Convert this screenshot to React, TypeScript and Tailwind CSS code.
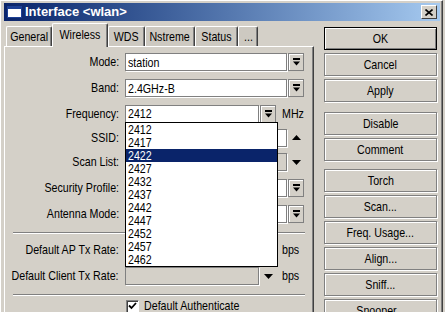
import React from 'react';

const FONT = "font-['Liberation_Sans',Arial,sans-serif]";

/* narrow text: Arial Narrow is not installed, so squeeze Liberation Sans */
function N({ children, o = 'origin-center' }: { children: React.ReactNode; o?: string }) {
  return <span className={'inline-block shrink-0 whitespace-nowrap scale-x-[0.82] ' + o}>{children}</span>;
}

/* ─── small drawings ─── */
function ComboArrow() {
  return (
    <svg width="7" height="8" viewBox="0 0 7 8" className="block">
      <rect x="0" y="0" width="7" height="2" fill="#000" />
      <path d="M0 3.5h7L3.5 7.5z" fill="#000" />
    </svg>
  );
}

function DownArrow() {
  return (
    <svg width="9" height="5" viewBox="0 0 9 5" className="block">
      <path d="M0 0h9L4.5 5z" fill="#000" />
    </svg>
  );
}

function UpArrow() {
  return (
    <svg width="9" height="5" viewBox="0 0 9 5" className="block">
      <path d="M0 5h9L4.5 0z" fill="#000" />
    </svg>
  );
}

/* ─── controls ─── */
function Field({ value, width, disabled }: { value?: string; width: number; disabled?: boolean }) {
  return (
    <div
      className={
        'h-[18px] border border-[#808080] shadow-[1px_1px_0_#fff] flex items-center pl-[2px] leading-none overflow-hidden ' +
        (disabled ? 'bg-[#d4d0c8]' : 'bg-white')
      }
      style={{ width }}
    >
      {value && <N o="origin-left">{value}</N>}
    </div>
  );
}

function ComboButton() {
  return (
    <div className="h-[18px] w-[16px] ml-[1px] border border-[#808080] shadow-[inset_1px_1px_0_#fff] bg-[#d4d0c8] flex items-center justify-center">
      <ComboArrow />
    </div>
  );
}

function Row({ label, h, children }: { label: string; h: number; children?: React.ReactNode }) {
  return (
    <div className="flex items-center" style={{ height: h }}>
      <div className="w-[114px] flex justify-end">
        <N o="origin-right">{label}</N>
      </div>
      <div className="ml-[6px] flex items-center relative">{children}</div>
    </div>
  );
}

function Separator() {
  return <div className="ml-[8px] w-[292px] border-t border-[#808080] border-b border-b-white" />;
}

function Btn({ label, primary, className = '' }: { label: string; primary?: boolean; className?: string }) {
  return (
    <div
      className={
        'h-[23px] w-[113px] flex items-center justify-center bg-[#d4d0c8] ' +
        (primary
          ? 'border border-black shadow-[inset_1px_1px_0_#fff,inset_-1px_-1px_0_#808080] '
          : 'border border-[#808080] shadow-[inset_1px_1px_0_#fff,1px_1px_0_#fff] ') +
        className
      }
    >
      <N>{label}</N>
    </div>
  );
}

const TABS = [
  { label: 'General', w: 46 },
  { label: 'Wireless', w: 56, active: true },
  { label: 'WDS', w: 37 },
  { label: 'Nstreme', w: 50 },
  { label: 'Status', w: 43 },
  { label: '...', w: 20 },
];

const FREQS = ['2412', '2417', '2422', '2427', '2432', '2437', '2442', '2447', '2452', '2457', '2462'];

export default function App() {
  return (
    <div className={'w-[445px] h-[312px] overflow-hidden bg-[#d4d0c8] text-[13px] text-black ' + FONT}>
      <div className="w-[443px] h-[340px] border-t border-l border-white border-r border-r-[#404040] p-[2px] shadow-[inset_-1px_0_0_#808080]">

        {/* Title bar */}
        <div className="h-[18px] ml-[1px] bg-gradient-to-r from-[#0a246a] to-[#a6caf0] flex items-center pl-[3px] pr-[3px]">
          <svg width="15" height="12" viewBox="0 0 15 12" className="block">
            <rect x="0.5" y="0.5" width="14" height="11" fill="#fff" stroke="#1c3f94" />
            <rect x="0" y="0" width="15" height="3" fill="#1c3f94" />
          </svg>
          <span className="ml-[3px] text-white font-bold text-[13px]">Interface &lt;wlan&gt;</span>
          <div className="ml-auto h-[14px] w-[16px] bg-[#d4d0c8] border border-t-white border-l-white border-r-[#404040] border-b-[#404040] flex items-center justify-center">
            <svg width="8" height="7" viewBox="0 0 8 7" className="block">
              <path d="M0.5 0.5L7.5 6.5M7.5 0.5L0.5 6.5" stroke="#000" strokeWidth="1.6" />
            </svg>
          </div>
        </div>

        <div className="flex mt-[2px]">
          {/* Left: tabs + panel */}
          <div className="ml-[1px] w-[310px]">
            <div className="h-[23px] pl-[2px] flex items-end">
              {TABS.map(t => (
                <div
                  key={t.label}
                  className={
                    'flex items-center justify-center border-t border-l border-white border-r border-r-[#404040] shadow-[inset_-1px_0_0_#808080] rounded-t-[2px] ' +
                    (t.active ? 'h-[24px] -mb-[1px] relative z-10 bg-[#d4d0c8] pb-[2px]' : 'h-[20px] bg-[#cdc9c1]')
                  }
                  style={{ width: t.w }}
                >
                  <N>{t.label}</N>
                </div>
              ))}
            </div>

            {/* Panel */}
            <div className="h-[300px] border-t border-l border-white border-r border-r-[#404040] shadow-[inset_-1px_0_0_#808080] pt-[2px]">
              <Row label="Mode:" h={26}>
                <Field value="station" width={162} />
                <ComboButton />
              </Row>
              <Row label="Band:" h={26}>
                <Field value="2.4GHz-B" width={162} />
                <ComboButton />
              </Row>
              <Row label="Frequency:" h={25}>
                <div className="relative">
                  <Field value="2412" width={134} />
                  {/* open list */}
                  <div className="absolute left-0 top-[17px] w-[153px] z-20 bg-white border border-black">
                    {FREQS.map(f => (
                      <div
                        key={f}
                        className={
                          'h-[13px] leading-[13px] pl-[2px] ' +
                          (f === '2422' ? 'bg-[#0a246a] text-white' : '')
                        }
                      >
                        <N o="origin-left">{f}</N>
                      </div>
                    ))}
                  </div>
                </div>
                <ComboButton />
                <span className="ml-[6px]"><N o="origin-left">MHz</N></span>
              </Row>
              <Row label="SSID:" h={23}>
                <Field width={162} />
                <span className="ml-[5px]"><UpArrow /></span>
              </Row>
              <Row label="Scan List:" h={26}>
                <Field width={162} disabled />
                <span className="ml-[5px]"><DownArrow /></span>
              </Row>
              <Row label="Security Profile:" h={26}>
                <Field width={162} />
                <ComboButton />
              </Row>
              <Row label="Antenna Mode:" h={26}>
                <Field width={162} />
                <ComboButton />
              </Row>

              <div className="h-[5px]" />
              <Separator />
              <div className="h-[3px]" />

              <Row label="Default AP Tx Rate:" h={26}>
                <Field width={134} />
                <span className="ml-[5px]"><DownArrow /></span>
                <span className="ml-[9px]"><N o="origin-left">bps</N></span>
              </Row>
              <Row label="Default Client Tx Rate:" h={26}>
                <Field width={134} disabled />
                <span className="ml-[5px]"><DownArrow /></span>
                <span className="ml-[9px]"><N o="origin-left">bps</N></span>
              </Row>

              <div className="h-[5px]" />
              <Separator />

              <div className="flex items-center h-[20px] pl-[121px]">
                <div className="h-[13px] w-[13px] bg-white border border-t-[#808080] border-l-[#808080] border-b-white border-r-white shadow-[inset_1px_1px_0_#404040] flex items-center justify-center">
                  <svg width="9" height="8" viewBox="0 0 9 8" className="block">
                    <path d="M1 3.5L3.5 6L8 1" stroke="#000" strokeWidth="1.8" fill="none" />
                  </svg>
                </div>
                <span className="ml-[5px]"><N o="origin-left">Default Authenticate</N></span>
              </div>
            </div>
          </div>

          {/* Right: buttons */}
          <div className="ml-[10px] mt-[4px] flex flex-col gap-[3px]">
            <Btn label="OK" primary />
            <Btn label="Cancel" />
            <Btn label="Apply" />
            <Btn label="Disable" className="mt-[7px]" />
            <Btn label="Comment" />
            <Btn label="Torch" className="mt-[5px]" />
            <Btn label="Scan..." />
            <Btn label="Freq. Usage..." />
            <Btn label="Align..." />
            <Btn label="Sniff..." />
            <Btn label="Snooper..." />
          </div>
        </div>
      </div>
    </div>
  );
}
